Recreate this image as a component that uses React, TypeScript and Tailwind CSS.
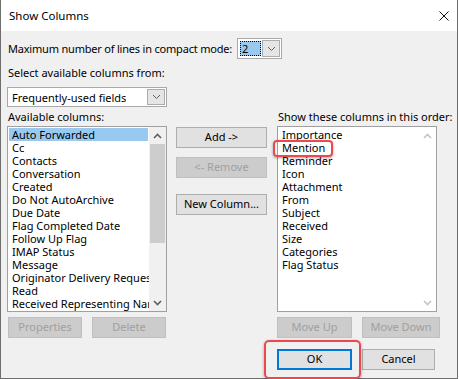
import React from 'react';

function Chevron({ up = false, color = '#606060', bold = false }: { up?: boolean; color?: string; bold?: boolean }) {
  return (
    <svg width="9" height="6" viewBox="0 0 9 6">
      <polyline
        points={up ? '1,5 4.5,1.5 8,5' : '1,1 4.5,4.5 8,1'}
        fill="none"
        stroke={color}
        strokeWidth={bold ? 1.6 : 1}
      />
    </svg>
  );
}

function Btn({
  children,
  className = '',
  disabled = false,
  primary = false,
}: {
  children: React.ReactNode;
  className?: string;
  disabled?: boolean;
  primary?: boolean;
}) {
  const base = 'h-[21px] flex items-center justify-center shrink-0';
  const look = disabled
    ? 'bg-[#cccccc] border border-[#bfbfbf] text-[#a0a0a0]'
    : primary
      ? 'bg-[#e1e1e1] border-2 border-[#0078d7] text-black'
      : 'bg-[#e1e1e1] border border-[#adadad] text-black';
  return <div className={`${base} ${look} ${className}`}>{children}</div>;
}

const available = [
  'Auto Forwarded',
  'Cc',
  'Contacts',
  'Conversation',
  'Created',
  'Do Not AutoArchive',
  'Due Date',
  'Flag Completed Date',
  'Follow Up Flag',
  'IMAP Status',
  'Message',
  'Originator Delivery Requested',
  'Read',
  'Received Representing Name',
];

const shown = [
  'Importance',
  'Mention',
  'Reminder',
  'Icon',
  'Attachment',
  'From',
  'Subject',
  'Received',
  'Size',
  'Categories',
  'Flag Status',
];

export default function App() {
  return (
    <div className="w-[459px] h-[379px] bg-white overflow-hidden font-['Noto_Sans',sans-serif] text-[11px] text-black">
      <div className="w-[458px] h-[379px] border-x border-b border-[#6e6e6e] flex flex-col">
        {/* title bar */}
        <div className="h-[31px] shrink-0 bg-white flex items-center justify-between pl-[8px] pr-[8px]">
          <span className="text-[11.5px]">Show Columns</span>
          <svg width="10" height="10" viewBox="0 0 10 10">
            <line x1="0.5" y1="0.5" x2="9.5" y2="9.5" stroke="#111" strokeWidth="1" />
            <line x1="9.5" y1="0.5" x2="0.5" y2="9.5" stroke="#111" strokeWidth="1" />
          </svg>
        </div>

        {/* body */}
        <div className="flex-1 bg-[#f0f0f0] pl-[6px] flex flex-col">
          <div className="mt-[7px] h-[21px] flex items-center">
            <span className="w-[230px] shrink-0 pl-[1px] leading-[13px] whitespace-nowrap tracking-[-0.2px]">
              Maximum number of lines in compact mode:
            </span>
            <div className="w-[45px] h-[21px] border border-[#a9a9a9] bg-white flex items-center pl-[2px] gap-[1px]">
              <div className="w-[21px] h-[15px] bg-[#99c9ef] border border-dotted border-black flex items-center pl-[1px] leading-[13px]">
                2
              </div>
              <div className="w-[18px] h-[17px] bg-[#e5e5e5] border border-[#acacac] flex items-center justify-center">
                <Chevron />
              </div>
            </div>
          </div>

          <div className="mt-[7px] pl-[1px] leading-[13px]">Select available columns from:</div>

          <div className="mt-[8px] w-[160px] h-[20px] border border-[#a9a9a9] bg-white flex items-center justify-between p-[1px]">
            <span className="pl-[3px] leading-[13px]">Frequently-used fields</span>
            <div className="w-[18px] h-[16px] bg-[#e5e5e5] border border-[#acacac] flex items-center justify-center">
              <Chevron />
            </div>
          </div>

          <div className="mt-[3px] flex">
            {/* left column */}
            <div className="w-[160px] flex flex-col">
              <div className="h-[16px] pl-[1px] leading-[14px]">Available columns:</div>
              <div className="h-[186px] border border-[#a0a0a0] bg-white flex">
                <div className="flex-1 min-w-0 pt-[1px] overflow-x-clip">
                  {available.map((item, i) => (
                    <div
                      key={item}
                      className={`mx-[1px] h-[13px] leading-[13px] pl-[3px] whitespace-nowrap ${
                        i === 0 ? 'bg-[#99c9ef]' : ''
                      }`}
                    >
                      {item}
                    </div>
                  ))}
                </div>
                <div className="w-[17px] shrink-0 bg-[#f0f0f0] flex flex-col">
                  <div className="h-[17px] flex items-center justify-center">
                    <Chevron up bold />
                  </div>
                  <div className="mx-[1px] h-[99px] bg-[#cdcdcd]" />
                  <div className="flex-1" />
                  <div className="h-[17px] flex items-center justify-center">
                    <Chevron bold />
                  </div>
                </div>
              </div>
              <div className="mt-[5px] flex">
                <Btn disabled className="ml-[1px] w-[74px]">Properties</Btn>
                <Btn disabled className="ml-[10px] w-[74px]">Delete</Btn>
              </div>
            </div>

            {/* middle column */}
            <div className="ml-[9px] w-[91px] pt-[17px] flex flex-col">
              <Btn className="w-[91px]">Add -&gt;</Btn>
              <Btn disabled className="mt-[9px] w-[91px]">&lt;- Remove</Btn>
              <Btn className="mt-[16px] w-[91px]">New Column...</Btn>
            </div>

            {/* right column */}
            <div className="ml-[10px] w-[164px] flex flex-col">
              <div className="h-[16px] pl-[1px] leading-[14px] whitespace-nowrap">Show these columns in this order:</div>
              <div className="w-[160px] h-[186px] border border-[#a0a0a0] bg-white flex">
                <div className="flex-1 pt-[1px]">
                  {shown.map((item) => (
                    <div key={item} className="relative mx-[1px] h-[13px] leading-[13px] pl-[3px] whitespace-nowrap">
                      {item}
                      {item === 'Mention' && (
                        <div className="absolute left-[-6px] top-[-1px] w-[60px] h-[17px] border-2 border-[#ea4a4f] rounded-[4px] shadow-[0_1px_3px_rgba(0,0,0,0.35)]" />
                      )}
                    </div>
                  ))}
                </div>
                <div className="w-[17px] flex flex-col justify-between">
                  <div className="h-[17px] flex items-center justify-center">
                    <Chevron up bold color="#c4c4c4" />
                  </div>
                  <div className="h-[17px] flex items-center justify-center">
                    <Chevron bold color="#c4c4c4" />
                  </div>
                </div>
              </div>
              <div className="mt-[5px] flex">
                <Btn disabled className="w-[75px]">Move Up</Btn>
                <Btn disabled className="ml-[10px] w-[78px]">Move Down</Btn>
              </div>
              <div className="mt-[11px] flex">
                <div className="relative">
                  <Btn primary className="w-[75px]">OK</Btn>
                  <div className="absolute left-[-13px] right-[-9px] top-[-9px] bottom-[-9px] border-2 border-[#ea4a4f] rounded-[5px] shadow-[0_1px_3px_rgba(0,0,0,0.35)]" />
                </div>
                <Btn className="ml-[10px] w-[73px]">Cancel</Btn>
              </div>
            </div>
          </div>
        </div>
      </div>
    </div>
  );
}
